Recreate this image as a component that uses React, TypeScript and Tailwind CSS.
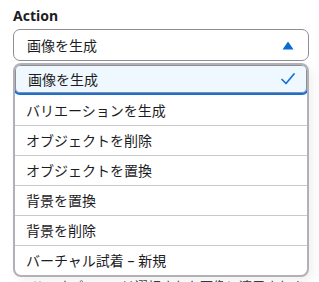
const options = [
  "画像を生成",
  "バリエーションを生成",
  "オブジェクトを削除",
  "オブジェクトを置換",
  "背景を置換",
  "背景を削除",
  "バーチャル試着 – 新規",
];

const font = "font-['Noto_Sans','Noto_Sans_CJK_JP',sans-serif]";

export default function App() {
  const selected = options[0];

  return (
    <div className={`relative h-[282px] w-[319px] overflow-hidden bg-white ${font} text-[#1d1d1f]`}>
      <div className="px-[13px] pt-[6px]">
        <label className="block text-[14px] font-bold leading-[20px] text-[#1d1d1f]">Action</label>

        {/* Select trigger */}
        <button className="mt-[3px] flex h-[32px] w-[296px] items-center justify-between rounded-[7px] border border-[#8e8e93] bg-white pl-[13px] pr-[14px] text-left text-[14px]">
          <span>{selected}</span>
          <svg width="12" height="9" viewBox="0 0 12 9" className="fill-[#0b6bd6]">
            <path d="M6 0.5 L11.5 8.5 H0.5 Z" />
          </svg>
        </button>

        {/* Content lying under the open menu */}
        <div className="mt-[49px] border-t border-[#c9c9cd]" />
        <div className="mt-[135px] border-t border-[#c9c9cd]" />
        <p className="mt-[30px] pl-[18px] text-[13px] leading-[18px] text-[#3a3a3c]">このオプションは選択された画像に適用されます</p>
      </div>

      {/* Open menu */}
      <ul className="absolute left-[13px] top-[63px] w-[296px] overflow-hidden rounded-[8px] border-2 border-[#b1b1b7] bg-white shadow-[4px_4px_10px_rgba(0,0,0,0.06)]">
        {options.map((opt, i) =>
          i === 0 ? (
            <li
              key={opt}
              className="-mx-[2px] -mt-[2px] flex h-[32px] items-center justify-between rounded-[7px] border-2 border-[#1570dc] bg-[#eef8fe] pl-[13px] pr-[12px] text-[14px] shadow-[inset_0_0_0_1px_#8d8d94]"
            >
              <span>{opt}</span>
              <svg width="14" height="12" viewBox="0 0 14 12" fill="none" className="stroke-[#1570dc]">
                <path d="M1 6.5 L5 10.5 L13 1" strokeWidth="1.7" strokeLinecap="round" strokeLinejoin="round" />
              </svg>
            </li>
          ) : (
            <li
              key={opt}
              className={`flex h-[30px] items-center pl-[11px] text-[14px] ${i > 1 ? "border-t border-[#c9c9cd]" : ""}`}
            >
              {opt}
            </li>
          )
        )}
      </ul>
    </div>
  );
}
